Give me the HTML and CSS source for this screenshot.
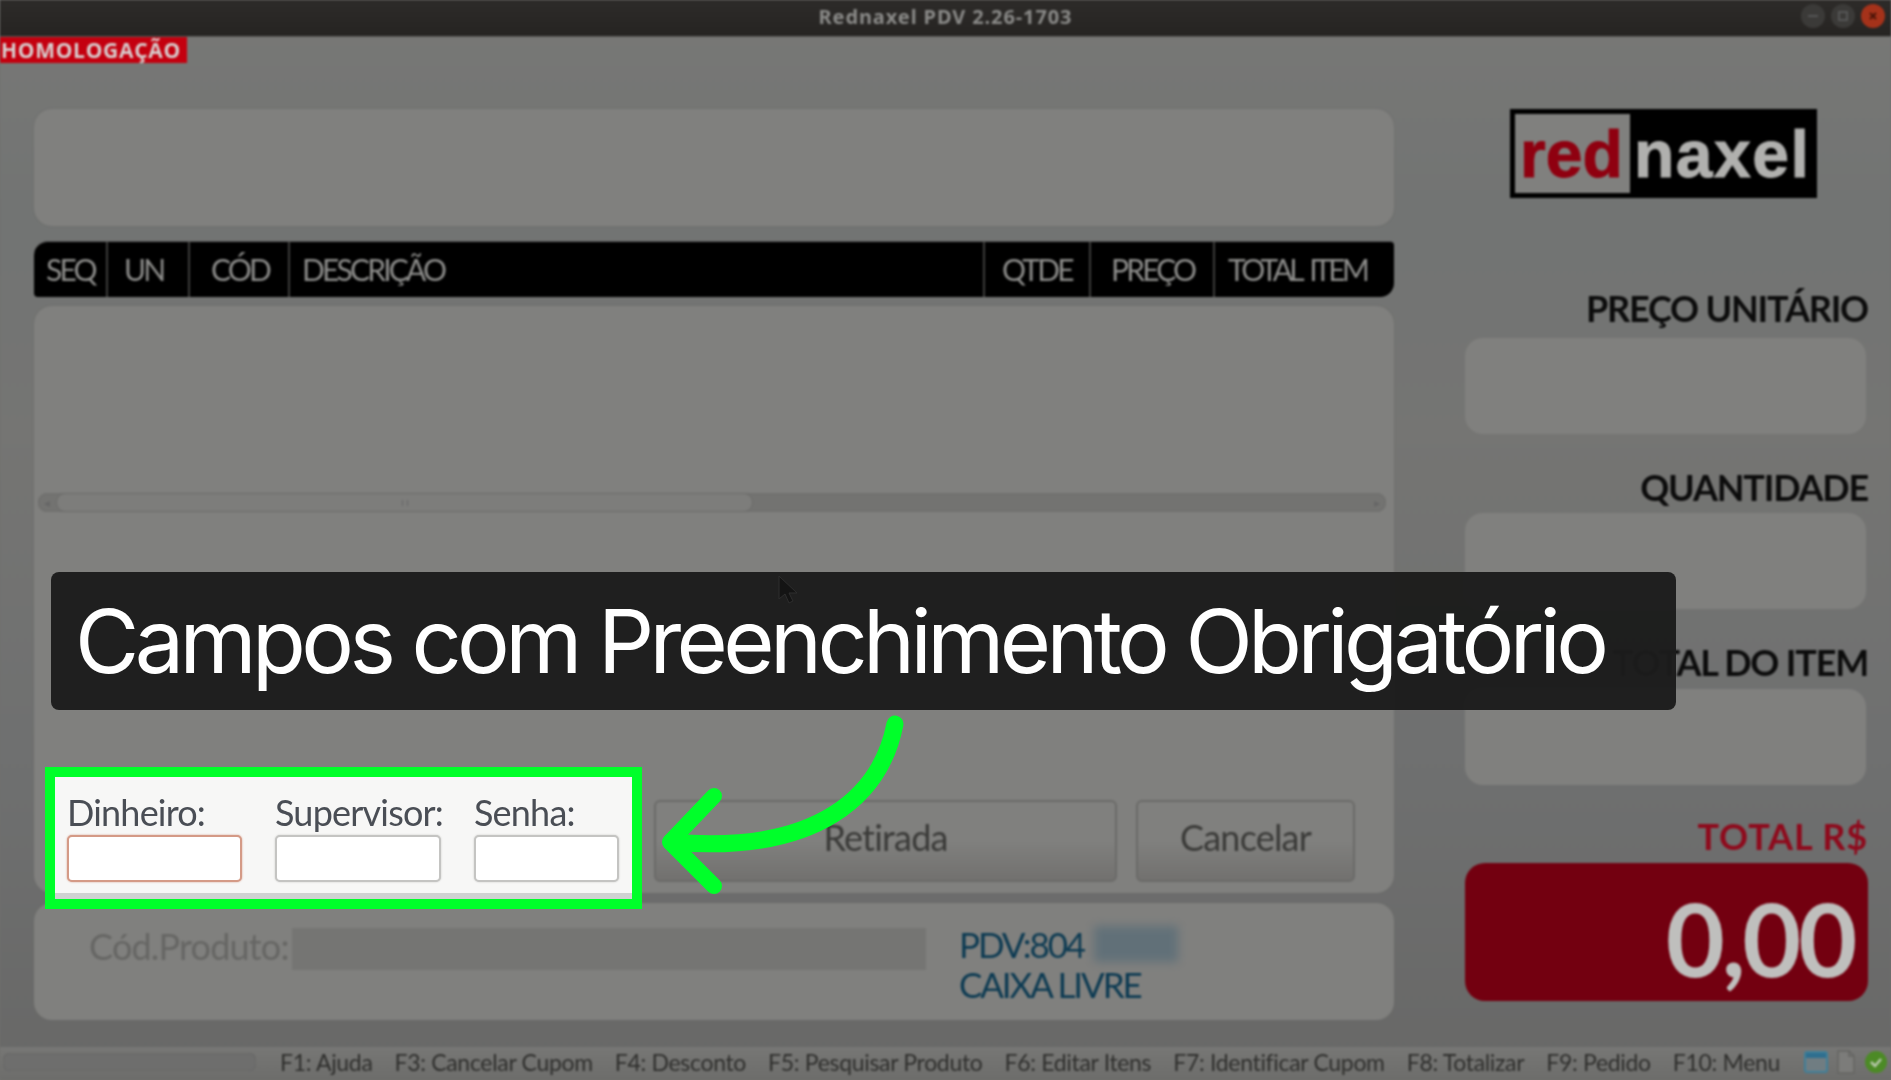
FILE: index.html
```html
<!DOCTYPE html>
<html lang="pt-BR">
<head>
<meta charset="utf-8">
<title>Rednaxel PDV</title>
<link rel="stylesheet" href="styles.css">
</head>
<body>
<div class="stage">
  <div class="app">
    <header class="titlebar">
      <span class="title">Rednaxel PDV 2.26-1703</span>
      <div class="winbtns">
        <span class="winbtn"><svg width="24" height="24" viewBox="0 0 24 24"><path d="M7 12h10" stroke="#555" stroke-width="2"/></svg></span>
        <span class="winbtn"><svg width="24" height="24" viewBox="0 0 24 24"><rect x="8" y="8" width="8" height="8" fill="none" stroke="#555" stroke-width="2"/></svg></span>
        <span class="winbtn winbtn-close"><svg width="24" height="24" viewBox="0 0 24 24"><path d="M9 9l6 6M15 9l-6 6" stroke="#4a1408" stroke-width="2"/></svg></span>
      </div>
    </header>
    <div class="env-row"><span class="env">HOMOLOGAÇÃO</span></div>
    <main class="main">
      <section class="left">
        <div class="panel panel-top"></div>
        <div class="grid-head">
          <span class="col c-seq">SEQ</span>
          <span class="col c-un">UN</span>
          <span class="col c-cod">CÓD</span>
          <span class="col c-desc">DESCRIÇÃO</span>
          <span class="col c-qtd">QTDE</span>
          <span class="col c-pre">PREÇO</span>
          <span class="col c-tot">TOTAL ITEM</span>
        </div>
        <div class="panel panel-list">
          <div class="scrollbar">
            <span class="sb-arrow">&#9666;</span>
            <span class="sb-thumb"><i class="grip"></i></span>
            <span class="sb-arrow sb-arrow-r">&#9656;</span>
          </div>
          <div class="actions">
            <button class="btn btn-ret">Retirada</button>
            <button class="btn btn-can">Cancelar</button>
          </div>
        </div>
        <div class="panel panel-prod">
          <span class="prod-label">Cód.Produto:</span>
          <span class="prod-input"></span>
          <div class="pdv">
            <div class="pdv-line">PDV:804 <span class="masked"></span></div>
            <div class="pdv-line">CAIXA LIVRE</div>
          </div>
        </div>
      </section>
      <aside class="right">
        <div class="logo"><span class="logo-red">red</span><span class="logo-white">naxel</span></div>
        <div class="rlabel rl-1">PREÇO UNITÁRIO</div>
        <div class="rbox"></div>
        <div class="rlabel rl-2">QUANTIDADE</div>
        <div class="rbox"></div>
        <div class="rlabel rl-3">TOTAL DO ITEM</div>
        <div class="rbox"></div>
        <div class="rlabel rl-total">TOTAL R$</div>
        <div class="total-box">0,00</div>
      </aside>
    </main>
    <footer class="status">
      <span class="progress"></span>
      <span class="key">F1: Ajuda</span>
      <span class="key">F3: Cancelar Cupom</span>
      <span class="key">F4: Desconto</span>
      <span class="key">F5: Pesquisar Produto</span>
      <span class="key">F6: Editar Itens</span>
      <span class="key">F7: Identificar Cupom</span>
      <span class="key">F8: Totalizar</span>
      <span class="key">F9: Pedido</span>
      <span class="key">F10: Menu</span>
      <div class="tray">
        <svg width="24" height="22" viewBox="0 0 24 22"><rect x="1" y="1" width="22" height="20" rx="2" fill="#707d82" stroke="#3f7f99" stroke-width="2"/><rect x="2" y="2" width="20" height="5" fill="#2f6f8f"/></svg>
        <svg width="20" height="24" viewBox="0 0 20 24"><path d="M2 1h11l5 5v17H2z" fill="#7c7c7a" stroke="#646462" stroke-width="1.5"/><path d="M13 1v5h5" fill="none" stroke="#646462" stroke-width="1.5"/></svg>
        <svg width="24" height="24" viewBox="0 0 24 24"><circle cx="12" cy="12" r="11" fill="#4c8a26"/><path d="M7 12l4 4 6-7" fill="none" stroke="#b9c9ac" stroke-width="2.5"/></svg>
      </div>
    </footer>
  </div>

  <svg class="cursor" width="24" height="30" viewBox="0 0 24 30"><path d="M2 1v23l6-5 4 9 4-2-4-8h8z" fill="#141414" stroke="#2e2e2e"/></svg>
  <div class="caption">Campos com Preenchimento Obrigatório</div>
  <svg class="arrow" width="250" height="190" viewBox="0 0 250 190">
    <path d="M236 9C222 80 160 140 12 127" fill="none" stroke="#00ff2a" stroke-width="17" stroke-linecap="round"/>
    <path d="M55 81L11 127L55 171" fill="none" stroke="#00ff2a" stroke-width="16" stroke-linecap="round" stroke-linejoin="round"/>
  </svg>
  <div class="focus">
    <div class="focus-inner">
      <label class="fld fld-din"><span class="fld-label">Dinheiro:</span><span class="fld-input fld-input-req"></span></label>
      <label class="fld fld-sup"><span class="fld-label">Supervisor:</span><span class="fld-input"></span></label>
      <label class="fld fld-sen"><span class="fld-label">Senha:</span><span class="fld-input"></span></label>
    </div>
  </div>
</div>
</body>
</html>
```
FILE: styles.css
```css
* { box-sizing: border-box; }
html, body { margin: 0; padding: 0; background: #6f6f6e; }
.stage { position: relative; width: 1891px; height: 1080px; overflow: hidden; }
.app {
  width: 1891px; height: 1080px; display: flex; flex-direction: column;
  font-family: Lato, "Liberation Sans", sans-serif;
  background: linear-gradient(180deg, #787876 0%, #727473 20%, #757573 40%, #6f7070 70%, #686867 100%);
  filter: blur(1.1px);
}
.titlebar {
  height: 37px; flex: none; background: linear-gradient(#2d2b29, #262422); padding-bottom: 4px;
  display: flex; align-items: center; justify-content: center; position: relative;
  border-bottom: 1px solid #5c5c5a;
}
.title { font-family: "Noto Sans", sans-serif; font-weight: 700; font-size: 20px; letter-spacing: 0.9px; color: #8a8a88; }
.winbtns { position: absolute; right: 6px; top: 4px; display: flex; gap: 6px; }
.winbtn { width: 24px; height: 24px; border-radius: 50%; background: #3b3a38; display: block; }
.winbtn-close { background: #a5321a; }
.env-row { height: 26px; flex: none; display: flex; }
.env {
  width: 187px; background: #c4000f; color: #d8d0d0; font-family: "Open Sans", sans-serif; font-weight: 700;
  font-size: 21px; line-height: 26px; letter-spacing: 0.7px; padding-left: 1px; white-space: nowrap; overflow: hidden;
}
.main { flex: none; display: flex; padding: 46px 0 0 34px; gap: 71px; height: 984px; }
.left { width: 1360px; display: flex; flex-direction: column; }
.panel { background: #80807e; border-radius: 18px; box-shadow: 0 0 2px #6a6a68; }
.panel-top { height: 117px; }
.grid-head {
  height: 56px; margin-top: 15px; background: #000; border-radius: 4px 4px 14px 4px;
  border-top-left-radius: 14px; border-top: 1px solid #555; display: grid;
  grid-template-columns: 72px 82px 100px 695px 106px 124px 181px;
}
.col {
  color: #8c8c8a; font-size: 30px; letter-spacing: -2.8px; line-height: 55px; white-space: nowrap; padding-left: 12px;
  border-left: 2px solid #3d3d3c;
}
.c-seq { border-left: 0; padding-left: 12px; }
.c-un { padding-left: 16px; }
.c-cod { padding-left: 21px; }
.c-qtd { padding-left: 17px; }
.c-pre { padding-left: 20px; }
.c-tot { padding-left: 13px; letter-spacing: -3.6px; word-spacing: 5px; }
.panel-list { height: 587px; margin-top: 9px; display: flex; flex-direction: column; padding: 187px 8px 11px 4px; }
.scrollbar { height: 19px; background: #737371; border-radius: 9px; display: flex; box-shadow: inset 0 0 2px #666; }
.sb-arrow { width: 18px; color: #666; font-size: 12px; line-height: 19px; text-align: center; flex: none; }
.sb-arrow-r { margin-left: auto; }
.sb-thumb { width: 697px; background: #7d7d7b; border-radius: 9px; border: 1px solid #6b6b69; display: flex; align-items: center; justify-content: center; }
.grip { width: 6px; height: 6px; border-left: 1px solid #666; border-right: 1px solid #666; display: block; }
.actions { margin-top: auto; display: flex; justify-content: flex-end; gap: 19px; padding-right: 31px; }
.btn {
  height: 82px; font-family: Lato, sans-serif; font-size: 36px; letter-spacing: -0.8px; color: #3a3a38; border: 2px solid #6a6a68; border-radius: 6px;
  background: linear-gradient(#80807e 0%, #80807e 50%, #72716f 100%); padding: 0 0 8px;
}
.btn-ret { width: 463px; }
.btn-can { width: 219px; }
.panel-prod { height: 117px; margin-top: 10px; display: flex; padding: 25px 0 0 55px; position: relative; }
.prod-label { font-size: 36px; letter-spacing: -0.8px; color: #666664; line-height: 36px; width: 203px; white-space: nowrap; }
.prod-input { width: 634px; height: 42px; background: #757573; }
.pdv { margin-left: 33px; margin-top: -4px; color: #0c3a52; font-size: 35px; letter-spacing: -2.1px; line-height: 40px; white-space: nowrap; }
.pdv-line { display: flex; align-items: center; gap: 10px; height: 40px; }
.masked { width: 84px; height: 36px; background: #5c6e78; opacity: 0.85; filter: blur(5px); display: block; }
.right { width: 403px; display: flex; flex-direction: column; }
.logo {
  width: 307px; height: 89px; margin-left: 45px; background: linear-gradient(90deg, #80807e 0 115px, #000 115px);
  border: 5px solid #000; display: flex; align-items: center;
  font-family: "Liberation Sans", sans-serif; font-weight: 700; font-size: 66px; padding-left: 5px; line-height: 1;
  -webkit-text-stroke: 1px currentColor;
}
.logo-red { color: #8f0010; width: 114px; }
.logo-white { color: #b0b0ae; letter-spacing: 1.5px; }
.rlabel { height: 50px; margin-top: 29px; color: #0c0c0c; font-weight: 700; font-size: 36px; letter-spacing: -1.2px; line-height: 44px; text-align: right; white-space: nowrap; }
.rl-1 { margin-top: 90px; line-height: 40px; }
.rl-2 { line-height: 48px; }
.rl-3 { margin-top: 30px; line-height: 46px; }
.rl-total { margin-top: 28px; color: #8e0a1c; line-height: 46px; letter-spacing: 0.9px; }
.rbox { height: 96px; width: 401px; background: #80807e; border-radius: 18px; }
.total-box {
  height: 138px; background: #730010; border-radius: 20px; color: #bfbfbd; font-weight: 700; font-size: 102px;
  line-height: 150px; text-align: right; padding-right: 14px; letter-spacing: -3.3px;
}
.status { flex: none; background: linear-gradient(#777775, #6d6d6b); display: flex; align-items: center; gap: 22px; padding: 0 3px 4px 3px; height: 33px; }
.progress { width: 253px; height: 18px; border-radius: 6px; background: #6e6e6d; box-shadow: inset 0 0 2px #5f5f5e; flex: none; margin-right: 2px; }
.key { font-size: 23px; letter-spacing: -0.32px; color: #2e2e2c; white-space: nowrap; flex: none; }
.tray { display: flex; align-items: center; gap: 8px; margin-left: auto; flex: none; }
.cursor { position: absolute; left: 777px; top: 575px; z-index: 3; filter: blur(0.6px); }
.caption {
  position: absolute; left: 51px; top: 572px; width: 1625px; height: 138px; z-index: 2;
  background: rgba(28, 28, 28, 0.97); border-radius: 8px;
  font-family: Inter, sans-serif; font-size: 88px; line-height: 138px; color: #fff; padding-left: 24px; white-space: nowrap; letter-spacing: -4.6px;
}
.arrow { position: absolute; left: 659px; top: 715px; z-index: 4; overflow: visible; }
.focus { position: absolute; left: 45px; top: 767px; width: 597px; height: 142px; border: 10px solid #00ff2a; background: #d0d2d2; z-index: 4; }
.focus-inner {
  height: 116px; background: #f7f7f6; display: flex; padding-left: 12px; filter: blur(0.7px);
  font-family: Lato, sans-serif;
}
.fld { display: flex; flex-direction: column; }
.fld-din { width: 208px; }
.fld-sup { width: 199px; }
.fld-sen { width: 145px; }
.fld-din .fld-input { width: 175px; }
.fld-sup .fld-input { width: 166px; }
.fld-sen .fld-input { width: 145px; }
.fld-label { font-size: 36px; letter-spacing: -0.8px; line-height: 46px; padding-top: 12px; color: #4a4e55; white-space: nowrap; }
.fld-input { height: 47px; background: #fff; border: 2px solid #c4c4c2; border-radius: 5px; display: block; box-shadow: 0 0 2px #c4c4c2; }
.fld-input-req { border-color: #d49a86; box-shadow: 0 0 2px #d49a86; }
```
